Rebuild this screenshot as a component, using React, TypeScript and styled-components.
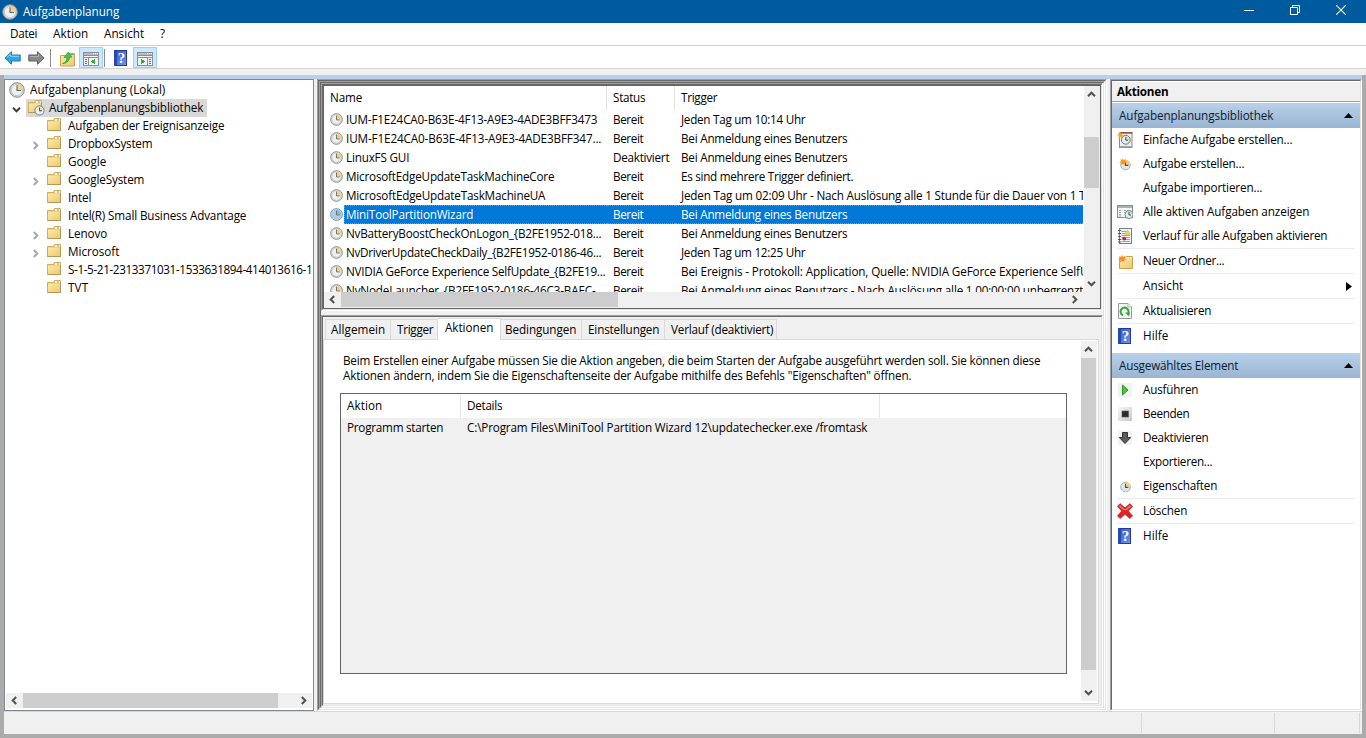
import React, { useLayoutEffect, useRef } from "react";
import styled, { createGlobalStyle, css } from "styled-components";

const GlobalStyle = createGlobalStyle`
  * { box-sizing: border-box; }
  body {
    margin: 0;
    background: #f0f0f0;
    color: #000;
    font-family: "Open Sans", "Noto Sans", sans-serif;
    font-size: 11.7px;
    overflow: hidden;
  }
  svg { display: block; flex: none; }
`;

/* ---------- text with a fixed advance width ---------- */

const LabelText = styled.span`
  white-space: pre;
  flex: none;
`;

/** Single-line text whose tracking is adjusted so that it takes up `width` pixels. */
function Label({ text, width }: { text: string; width: number }) {
  const ref = useRef<HTMLSpanElement>(null);
  useLayoutEffect(() => {
    const el = ref.current;
    if (!el) return;
    el.style.letterSpacing = "0px";
    const natural = el.getBoundingClientRect().width;
    el.style.letterSpacing = `${(width + 0.3 - natural) / text.length}px`;
  }, [text, width]);
  return <LabelText ref={ref}>{text}</LabelText>;
}

/* ---------- window shell ---------- */

const Window = styled.div`
  width: 1366px;
  height: 738px;
  display: flex;
  flex-direction: column;
  background: #f0f0f0;
`;

const TitleBar = styled.header`
  height: 23px;
  flex: none;
  display: flex;
  align-items: center;
  padding: 0 2px;
  background: #005a9e;
  color: #fff;
`;

const TitleText = styled.div`
  margin-left: 5px;
  flex: 1;
  line-height: 23px;
`;

const WindowButton = styled.div`
  width: 46px;
  height: 23px;
  display: flex;
  align-items: center;
  justify-content: center;
  padding-bottom: 3px;
`;

const MenuBar = styled.nav`
  height: 23px;
  flex: none;
  display: flex;
  gap: 15.7px;
  padding-left: 10px;
  line-height: 21px;
  background: #fff;
  border-bottom: 1px solid #d0d0d3;
`;

const ToolBar = styled.div`
  height: 23px;
  flex: none;
  display: flex;
  align-items: flex-end;
  padding-left: 3px;
  background: #fff;
  border-bottom: 1px solid #d5d5d5;
`;

const ToolButton = styled.div<{ $on?: boolean; $width: number; $drop?: number }>`
  width: ${(p) => p.$width}px;
  height: 21px;
  display: flex;
  align-items: center;
  justify-content: center;
  padding-top: ${(p) => p.$drop ?? 0}px;
  ${(p) =>
    p.$on &&
    css`
      background: #cce8ff;
      border: 1px solid #99d1ff;
    `}
`;

const ToolDivider = styled.div<{ $left: number; $right: number }>`
  width: 1px;
  height: 18px;
  margin: 0 ${(p) => p.$right}px 1px ${(p) => p.$left}px;
  background: #8c8c8c;
`;

const Body = styled.div`
  flex: 1;
  margin-top: 6px;
  min-height: 0;
  display: flex;
  flex-direction: column;
  background: #f0f0f0;
  border: solid #ababab;
  border-width: 0 4px 4px;
`;

const AccentStrip = styled.div`
  height: 4px;
  flex: none;
  background: #b8d0ea;
`;

const Panes = styled.main`
  height: 632px;
  flex: none;
  display: flex;
  gap: 3px;
`;

const StatusBar = styled.footer`
  flex: 1;
  display: flex;
  border-top: 1px solid #d7d7d7;
  padding: 1px 2px 1px 0;
`;

const StatusCell = styled.div<{ $width: number }>`
  width: ${(p) => p.$width}px;
  border-right: 1px solid #d7d7d7;
`;

const Sunken = styled.div`
  flex: 1;
  min-height: 0;
  min-width: 0;
  display: flex;
  flex-direction: column;
  border: 1px solid;
  border-color: #a0a0a0 #fff #fff #a0a0a0;
`;

const SunkenInner = styled(Sunken)`
  border-color: #696969 #e3e3e3 #e3e3e3 #696969;
`;

function Frame({ children }: { children: React.ReactNode }) {
  return (
    <Sunken>
      <SunkenInner>{children}</SunkenInner>
    </Sunken>
  );
}

/* ---------- scroll bars ---------- */

const HTrack = styled.div<{ $height: number }>`
  height: ${(p) => p.$height}px;
  flex: none;
  display: flex;
  align-items: flex-start;
  background: #f0f0f0;
`;

const VTrack = styled.div<{ $width: number }>`
  width: ${(p) => p.$width}px;
  flex: none;
  display: flex;
  flex-direction: column;
  background: #f0f0f0;
`;

const ScrollArrow = styled.div`
  width: 17px;
  height: 17px;
  flex: none;
  display: flex;
  align-items: center;
  justify-content: center;
`;

const HArrow = styled(ScrollArrow)`
  height: 15px;
`;

const VArrow = styled(ScrollArrow)`
  width: 15px;
`;

const HThumb = styled.div<{ $width: number }>`
  width: ${(p) => p.$width}px;
  height: 15px;
  background: #cdcdcd;
`;

const VThumb = styled.div<{ $height: number }>`
  width: 15px;
  height: ${(p) => p.$height}px;
  background: #cdcdcd;
`;

const Spring = styled.div<{ $size?: number }>`
  flex: ${(p) => (p.$size ? `none` : 1)};
  height: ${(p) => (p.$size ? `${p.$size}px` : "auto")};
`;

/* ---------- tree pane ---------- */

const TreePane = styled.aside`
  width: 310px;
  display: flex;
  flex-direction: column;
  padding: 1px 1px 2px 1px;
  background: #fff;
  border: 1px solid #828790;
`;

const TreeRows = styled.div`
  flex: 1;
  min-height: 0;
  overflow: hidden;
`;

const TreeRow = styled.div<{ $level: number }>`
  height: 18px;
  display: flex;
  align-items: flex-start;
  line-height: 17px;
  padding-left: ${(p) => [3, 2, 21][p.$level]}px;
`;

const TreeToggle = styled.div`
  width: 17px;
  height: 18px;
  flex: none;
  display: flex;
  align-items: center;
  justify-content: center;
  padding-top: 2px;
`;

const TreeIcon = styled.div<{ $level: number }>`
  width: ${(p) => [21, 23, 24][p.$level]}px;
  flex: none;
  padding: ${(p) => ["1px 0 0 0", "1px 0 0 2px", "1px 0 0 3px"][p.$level]};
`;

const Highlight = styled.div`
  height: 18px;
  width: 181px;
  margin-left: 1px;
  display: flex;
  align-items: flex-start;
  background: #d9d9d9;
`;

/* ---------- centre ---------- */

const Center = styled.section`
  width: 790px;
  display: flex;
`;

const TopSlot = styled.div`
  height: 228px;
  flex: none;
  display: flex;
  margin-bottom: 4px;
`;

const BottomSlot = styled.div`
  flex: 1;
  min-height: 0;
  display: flex;
`;

const ListBox = styled.div`
  flex: 1;
  min-height: 0;
  display: flex;
  flex-direction: column;
  background: #fff;
  border: 1px solid #646464;
`;

const ListMain = styled.div`
  flex: 1;
  min-height: 0;
  display: flex;
`;

const ListTable = styled.div`
  width: 759px;
  margin-right: 1px;
  overflow: hidden;
`;

const Columns = styled.div`
  display: grid;
  grid-template-columns: 283px 68px 1fr;
`;

const ListHeader = styled(Columns)`
  height: 24px;
  line-height: 23px;
`;

const HeaderCell = styled.div<{ $last?: boolean }>`
  padding-left: 6px;
  white-space: nowrap;
  border-right: ${(p) => (p.$last ? "none" : "1px solid #e2e2e2")};
`;

const ListRow = styled(Columns)<{ $selected?: boolean }>`
  height: 19px;
  line-height: 19px;
  grid-template-columns: 20px 263px 68px 1fr;
  ${(p) =>
    p.$selected &&
    css`
      color: #fff;
      line-height: 17px;
    `}
`;

const RowIcon = styled.div`
  padding: 3px 0 0 6px;
`;

const ListCell = styled.div<{ $selected?: boolean; $first?: boolean }>`
  min-width: 0;
  height: 19px;
  overflow: visible;
  white-space: nowrap;
  padding-left: ${(p) => (p.$first ? 2 : 6)}px;
  ${(p) =>
    p.$selected &&
    css`
      background: #0078d7;
      border: dotted #e08030;
      border-width: 1px 0;
    `}
  ${(p) =>
    p.$selected &&
    p.$first &&
    css`
      border-left-width: 1px;
      padding-left: 1px;
    `}
`;

const Details = styled.div`
  flex: 1;
  min-height: 0;
  display: flex;
  flex-direction: column;
  padding: 1px 2px 1px 0;
  background: #f0f0f0;
`;

const Tabs = styled.div`
  height: 21px;
  flex: none;
  display: flex;
  align-items: flex-end;
  padding-left: 2px;
`;

const Tab = styled.div<{ $width: number; $pad: number; $active?: boolean }>`
  width: ${(p) => p.$width}px;
  height: 20px;
  line-height: 19px;
  padding-left: ${(p) => p.$pad}px;
  background: #f0f0f0;
  border: solid #d9d9d9;
  border-width: 1px 1px 0 0;
  &:first-child {
    border-left-width: 1px;
  }
  ${(p) =>
    p.$active &&
    css`
      height: 22px;
      margin-bottom: -1px;
      line-height: 17px;
      background: #fff;
      z-index: 1;
    `}
`;

const TabPage = styled.div`
  flex: 1;
  min-height: 0;
  display: flex;
  padding: 1px 1px 2px 0;
  background: #fff;
  border: 1px solid #d9d9d9;
`;

const PageBody = styled.div`
  flex: 1;
  padding: 12px 14px 0 16px;
`;

const Paragraph = styled.p`
  margin: 0 0 10px 3px;
  line-height: 15px;
  display: flex;
  flex-direction: column;
  align-items: flex-start;
`;

const ActionTable = styled.div`
  width: 727px;
  height: 281px;
  background: #f0f0f0;
  border: 1px solid #646464;
`;

const ActionColumns = styled.div<{ $header?: boolean }>`
  display: grid;
  grid-template-columns: 120px 419px 1fr;
  height: ${(p) => (p.$header ? 24 : 19)}px;
  line-height: ${(p) => (p.$header ? 23 : 19)}px;
  background: ${(p) => (p.$header ? "#fff" : "transparent")};
`;

const ActionCell = styled.div<{ $rule?: boolean }>`
  padding-left: 6px;
  white-space: nowrap;
  border-right: 1px solid ${(p) => (p.$rule ? "#e5e5e5" : "transparent")};
`;

/* ---------- action pane ---------- */

const SidePane = styled.aside`
  width: 252px;
  display: flex;
`;

const SideBody = styled.div`
  flex: 1;
  padding-top: 1px;
  background: #fff;
`;

const SideTitle = styled.div`
  height: 20px;
  line-height: 19px;
  padding-left: 5px;
  margin-bottom: 1px;
  font-weight: 700;
  background: #f0f0f0;
  border-bottom: 1px solid #a0a0a0;
`;

const GroupHeader = styled.div`
  height: 25px;
  display: flex;
  align-items: center;
  justify-content: space-between;
  padding: 0 7px 1px;
  line-height: 23px;
  color: #0a1a30;
  background: linear-gradient(#b9d1ea, #99b4d1);
`;

const Group = styled.div`
  margin-bottom: 5px;
`;

const ActionItem = styled.div`
  height: 24px;
  display: flex;
  align-items: center;
  padding: 0 8px 0 5px;
`;

const ActionLabel = styled.div`
  height: 24px;
  line-height: 23px;
  white-space: nowrap;
`;

const ActionIcon = styled.div`
  width: 26px;
  flex: none;
`;

const Rule = styled.div`
  height: 1px;
  margin: 0 5px;
  background: #ececec;
`;

/* ---------- icons ---------- */

function ClockIcon({ size = 16, face = "#eef1f3", rim = "#8d8d8d", wedge = "#f2d27c" }) {
  return (
    <svg width={size} height={size} viewBox="0 0 16 16">
      <circle cx="8" cy="8" r="7.3" fill="#d4d4d2" stroke={rim} strokeWidth="1" />
      <circle cx="8" cy="8" r="5.6" fill={face} stroke="#b5b5b5" strokeWidth="0.5" />
      <path d="M8 8V2.2A5.8 5.8 0 0 1 13.8 8Z" fill={wedge} />
      <path d="M8 3.2V8.5H12" fill="none" stroke="#5d6670" strokeWidth="1.1" />
    </svg>
  );
}

function FolderShape() {
  return (
    <>
      <path d="M0.5 2.5H6.5L7.5 0.5H13.5V12.5H0.5Z" fill="#e9c468" stroke="#d2ac58" />
      <path d="M8 1H13V3H8Z" fill="#fbf4da" />
      <path d="M10 1.5H12V2.5H10Z" fill="#5aa0d8" />
      <path d="M1 3.5H13V12H1Z" fill="url(#folderFill)" />
      <path d="M0.5 12.5H13.5V3" fill="none" stroke="#b3965a" />
    </>
  );
}

function FolderIcon() {
  return (
    <svg width="14" height="13" viewBox="0 0 14 13">
      <FolderShape />
    </svg>
  );
}

function LibraryIcon() {
  return (
    <svg width="17" height="16" viewBox="0 0 17 16">
      <FolderShape />
      <circle cx="11.5" cy="10.5" r="4.6" fill="#e9eef2" stroke="#77808a" />
      <path d="M11.5 10.5V7A3.6 3.6 0 0 1 15 10.5Z" fill="#f4dd9b" />
      <path d="M11.5 7.5V10.8H14" fill="none" stroke="#3e4c58" />
    </svg>
  );
}

function BackArrow({ gray }: { gray?: boolean }) {
  return (
    <svg width="17" height="14" viewBox="0 0 17 14">
      <path
        d={gray ? "M16 7L9.5 0.8V4H0.8V10H9.5V13.2Z" : "M1 7L7.5 0.8V4H16.2V10H7.5V13.2Z"}
        fill={gray ? "#8a8a8a" : "#2fa5e6"}
        stroke={gray ? "#5c5c5c" : "#2178b4"}
        strokeWidth="1"
      />
      <path
        d={gray ? "M2 5.5H10.5V3.3" : "M3 6.4L6.5 3.1V5.3H15"}
        fill="none"
        stroke={gray ? "#b4b4b4" : "#8fd8fa"}
        strokeWidth="1"
      />
    </svg>
  );
}

function FolderUpIcon() {
  return (
    <svg width="15" height="16" viewBox="0 0 15 16">
      <path d="M0.5 4.5H7L8 2.5H14.5V15H0.5Z" fill="url(#folderFill)" stroke="#c9a24c" />
      <path d="M11 3.5H13.5" stroke="#5aa0d8" />
      <path
        d="M2.5 12.5C6 11.5 7 9 6.8 6.5H4L8.3 1L12 6L9.5 6.2C9.6 10 6.5 12.5 2.5 12.5Z"
        fill="#4cc04a"
        stroke="#2a9a36"
        strokeWidth="0.7"
      />
    </svg>
  );
}

function ConsoleIcon({ right }: { right?: boolean }) {
  return (
    <svg width="16" height="14" viewBox="0 0 16 14" shapeRendering="crispEdges">
      <rect x="0" y="0" width="16" height="14" fill="#8b8f94" />
      <rect x="1" y="1" width="14" height="2" fill="#b9bdc2" />
      <rect x="10" y="1" width="1" height="1" fill="#fff" />
      <rect x="12" y="1" width="1" height="1" fill="#fff" />
      <rect x="14" y="1" width="1" height="1" fill="#fff" />
      <rect x="1" y="4" width="14" height="1" fill="#f6f6f6" />
      <rect x={right ? 1 : 6} y="6" width="9" height="7" fill="#f4f4f4" />
      <rect x={right ? 11 : 1} y="6" width="4" height="7" fill="#f4f4f4" />
      {[7, 9, 11].map((y) => (
        <rect key={y} x={right ? 12 : 2} y={y} width="2" height="1" fill="#4a6fae" />
      ))}
      <path d={right ? "M4 6.5V12.5L8 9.5Z" : "M12 6.5V12.5L8 9.5Z"} fill="#2fb02f" />
    </svg>
  );
}

const HelpGlyph = styled.div`
  width: 13px;
  height: 16px;
  margin-left: 1px;
  border: 1px solid #22399a;
  border-left: 3px solid #2a48b4;
  background: linear-gradient(135deg, #3b5cc8, #6f92ea);
  color: #fff;
  font-family: "Liberation Serif", serif;
  font-weight: 700;
  font-size: 15px;
  line-height: 14px;
  text-align: center;
`;

function HelpIcon() {
  return <HelpGlyph>?</HelpGlyph>;
}

const STAR = "M4 0L5 2.4L7.6 1.2L6.4 3.8L8.6 5L6 5.6L6.6 8L4.2 6.4L2 8L2.3 5.5L0 4.6L2.3 3.6L1 1.2L3.2 2.3Z";

function WizardIcon() {
  return (
    <svg width="16" height="16" viewBox="0 0 16 16">
      <rect x="2.5" y="1" width="12.5" height="14.5" fill="#f1f1f0" stroke="#8b8b8b" />
      <path d="M3 0.8H15.5" stroke="#8a4a35" strokeWidth="1.4" />
      <path d="M3 14.6H15" stroke="#aaa" strokeWidth="1.4" />
      <circle cx="8.8" cy="7.8" r="4.4" fill="#e2eef4" stroke="#63727c" />
      <path d="M8.8 7.8V4.4A3.4 3.4 0 0 1 12.2 7.8Z" fill="#f3dc9a" />
      <path d="M8.8 5V8.2H11.2" fill="none" stroke="#394a58" />
      <path d={STAR} transform="scale(0.8)" fill="#f9a51f" />
    </svg>
  );
}

function SmallClock({ star }: { star?: boolean }) {
  return (
    <svg width="16" height="16" viewBox="0 0 16 16">
      <circle cx="8.5" cy="9" r="4.8" fill="#dbe7ed" stroke="#a5b4bd" />
      <path d="M8.5 9V4A5 5 0 0 1 13.5 9Z" fill="#f5cf7c" />
      <path d="M8.5 5.8V9.4H11.4" fill="none" stroke="#465463" strokeWidth="1.1" />
      {star && <path d={STAR} transform="translate(2.2 2) scale(0.9)" fill="#f7951c" />}
    </svg>
  );
}

function RunningTasksIcon() {
  return (
    <svg width="16" height="16" viewBox="0 0 16 16">
      <rect x="0.5" y="1.5" width="15" height="12" fill="#f6f7f8" stroke="#868b90" />
      <rect x="1" y="2" width="14" height="2" fill="#a9b0b6" />
      <path d="M2 6.5H5M7 6.5H14M2 8.5H5M7 8.5H9M2 10.5H5M2 12H5" stroke="#9aa4ae" strokeDasharray="2 1" />
      <circle cx="12" cy="10.6" r="4" fill="#e4edf2" stroke="#7c8890" />
      <path d="M12 10.6V7.6A3 3 0 0 1 15 10.6Z" fill="#f3dc9a" />
      <path d="M12 8V11H14" fill="none" stroke="#3f4e5a" />
    </svg>
  );
}

function HistoryIcon() {
  return (
    <svg width="16" height="16" viewBox="0 0 16 16">
      <rect x="2.5" y="0.5" width="12" height="15" fill="#f3f6fb" stroke="#6f7f96" />
      <path d="M4.5 3.5H9M4.5 5.5H8M4.5 7.5H13M4.5 9.5H13M4.5 11.5H13M4.5 13.5H13" stroke="#8fa3c4" />
      <path d="M1 2.5H4M1 5.5H4M1 8.5H4M1 11.5H4M1 14H4" stroke="#555" />
      <path d="M10.5 2L13.2 6.3H7.8Z" fill="#ffd930" stroke="#d9a800" strokeWidth="0.6" />
      <circle cx="7.3" cy="10.6" r="1.9" fill="#d6232a" />
    </svg>
  );
}

function NewFolderIcon() {
  return (
    <svg width="16" height="16" viewBox="0 0 16 16">
      <path d="M2.5 4.5H8L9 3.5H15.5V15.5H2.5Z" fill="url(#folderFill)" stroke="#c9a24c" />
      <path d="M9.5 5H12M13 5H14.5" stroke="#fff" />
      <path d={STAR} transform="translate(1 1.6)" fill="#f7901c" />
    </svg>
  );
}

function RefreshIcon() {
  return (
    <svg width="16" height="16" viewBox="0 0 16 16">
      <path d="M1.5 0.5H11L14.5 4V15.5H1.5Z" fill="#f6f6f6" stroke="#9a9a9a" />
      <path d="M11 0.5V4H14.5" fill="#fff" stroke="#b0b0b0" />
      <path d="M6 12.3A4 4 0 1 1 10.6 11.2" fill="none" stroke="#2fa83a" strokeWidth="2" />
      <path d="M8 9.4L13 9.4L12 13.6Z" fill="#2fa83a" />
    </svg>
  );
}

function RunIcon() {
  return (
    <svg width="16" height="16" viewBox="0 0 16 16">
      <rect x="1" y="1" width="14" height="14" fill="#f2f2f2" />
      <path d="M5.5 3V13L11 8Z" fill="#49c832" stroke="#2c9a24" />
    </svg>
  );
}

function StopIcon() {
  return (
    <svg width="16" height="16" viewBox="0 0 16 16">
      <rect x="1" y="1" width="14" height="14" fill="url(#stopFill)" />
      <rect x="5" y="5" width="6.5" height="6" fill="#2b2b2b" stroke="#555" strokeWidth="0.6" />
    </svg>
  );
}

function DisableIcon() {
  return (
    <svg width="16" height="16" viewBox="0 0 16 16">
      <rect x="1" y="1" width="14" height="14" fill="#f2f2f2" />
      <path d="M5.5 2.5H10.5V7.5H13.7L8 13.5L2.3 7.5H5.5Z" fill="#5c5c5c" stroke="#333" />
    </svg>
  );
}

function DeleteIcon() {
  return (
    <svg width="16" height="16" viewBox="0 0 16 16">
      <path
        d="M3 0.6L8 4.8L13 0.6L15.6 3.4L11.4 8L15.6 13L12.8 15.6L8 11.2L3.2 15.6L0.4 13L4.6 8L0.4 3.4Z"
        fill="#e02424"
        stroke="#b01c1c"
        strokeWidth="0.6"
        strokeLinejoin="round"
      />
      <path d="M3 2L8 6.5L13 2L14 3.4L9.5 7.2H6.5L2 3.4Z" fill="#f08a8a" opacity="0.8" />
    </svg>
  );
}

const CHEVRONS = {
  left: "M6.2 1L2.7 4.5L6.2 8",
  right: "M2.8 1L6.3 4.5L2.8 8",
  up: "M1 6.2L4.5 2.7L8 6.2",
  down: "M1 2.8L4.5 6.3L8 2.8",
};

function Chevron({ dir, color = "#505050" }: { dir: keyof typeof CHEVRONS; color?: string }) {
  return (
    <svg width="9" height="9" viewBox="0 0 9 9">
      <path d={CHEVRONS[dir]} fill="none" stroke={color} strokeWidth="2" />
    </svg>
  );
}

const Defs = styled.svg`
  position: absolute;
`;

function SharedGradients() {
  return (
    <Defs width="0" height="0">
      <defs>
        <linearGradient id="folderFill" x1="0" y1="0" x2="1" y2="1">
          <stop offset="0" stopColor="#fdeaa8" />
          <stop offset="1" stopColor="#efc96f" />
        </linearGradient>
        <linearGradient id="stopFill" x1="0" y1="0" x2="1" y2="1">
          <stop offset="0" stopColor="#f8f8f8" />
          <stop offset="1" stopColor="#c8c8c8" />
        </linearGradient>
      </defs>
    </Defs>
  );
}

/* ---------- data ---------- */

type Txt = [text: string, width: number];

const TREE: { label: Txt; children?: boolean }[] = [
  { label: ["Aufgaben der Ereignisanzeige", 156] },
  { label: ["DropboxSystem", 84], children: true },
  { label: ["Google", 38] },
  { label: ["GoogleSystem", 76], children: true },
  { label: ["Intel", 23] },
  { label: ["Intel(R) Small Business Advantage", 178] },
  { label: ["Lenovo", 39], children: true },
  { label: ["Microsoft", 51], children: true },
  { label: ["S-1-5-21-2313371031-1533631894-414013616-1", 244] },
  { label: ["TVT", 20] },
];

const READY: Txt = ["Bereit", 30];
const LOGON: Txt = ["Bei Anmeldung eines Benutzers", 166];

const TASKS: { name: Txt; status: Txt; trigger: Txt; selected?: boolean }[] = [
  { name: ["IUM-F1E24CA0-B63E-4F13-A9E3-4ADE3BFF3473", 251], status: READY, trigger: ["Jeden Tag um 10:14 Uhr", 124] },
  { name: ["IUM-F1E24CA0-B63E-4F13-A9E3-4ADE3BFF347...", 255], status: READY, trigger: LOGON },
  { name: ["LinuxFS GUI", 63], status: ["Deaktiviert", 56], trigger: LOGON },
  { name: ["MicrosoftEdgeUpdateTaskMachineCore", 208], status: READY, trigger: ["Es sind mehrere Trigger definiert.", 172] },
  {
    name: ["MicrosoftEdgeUpdateTaskMachineUA", 199],
    status: READY,
    trigger: ["Jeden Tag um 02:09 Uhr - Nach Auslösung alle 1 Stunde für die Dauer von 1 T", 404],
  },
  { name: ["MiniToolPartitionWizard", 127], status: READY, trigger: LOGON, selected: true },
  { name: ["NvBatteryBoostCheckOnLogon_{B2FE1952-018...", 255], status: READY, trigger: LOGON },
  { name: ["NvDriverUpdateCheckDaily_{B2FE1952-0186-46...", 255], status: READY, trigger: ["Jeden Tag um 12:25 Uhr", 124] },
  {
    name: ["NVIDIA GeForce Experience SelfUpdate_{B2FE19...", 259],
    status: READY,
    trigger: ["Bei Ereignis - Protokoll: Application, Quelle: NVIDIA GeForce Experience SelfU", 407],
  },
  {
    name: ["NvNodeLauncher_{B2FE1952-0186-46C3-BAEC-...", 258],
    status: READY,
    trigger: ["Bei Anmeldung eines Benutzers - Nach Auslösung alle 1.00:00:00 unbegrenzt", 402],
  },
];

const TABS: { label: Txt; width: number; pad: number; active?: boolean }[] = [
  { label: ["Allgemein", 54], width: 66, pad: 5 },
  { label: ["Trigger", 36], width: 47, pad: 6 },
  { label: ["Aktionen", 48], width: 63, pad: 7, active: true },
  { label: ["Bedingungen", 71], width: 81, pad: 4 },
  { label: ["Einstellungen", 71], width: 83, pad: 6 },
  { label: ["Verlauf (deaktiviert)", 102], width: 112, pad: 6 },
];

type Entry = { label: Txt; icon?: React.ReactNode; submenu?: boolean; ruleBefore?: boolean };

const LIBRARY_ACTIONS: Entry[] = [
  { label: ["Einfache Aufgabe erstellen...", 149], icon: <WizardIcon /> },
  { label: ["Aufgabe erstellen...", 101], icon: <SmallClock star /> },
  { label: ["Aufgabe importieren...", 119] },
  { label: ["Alle aktiven Aufgaben anzeigen", 166], icon: <RunningTasksIcon /> },
  { label: ["Verlauf für alle Aufgaben aktivieren", 184], icon: <HistoryIcon /> },
  { label: ["Neuer Ordner...", 81], icon: <NewFolderIcon />, ruleBefore: true },
  { label: ["Ansicht", 40], submenu: true, ruleBefore: true },
  { label: ["Aktualisieren", 68], icon: <RefreshIcon />, ruleBefore: true },
  { label: ["Hilfe", 25], icon: <HelpIcon />, ruleBefore: true },
];

const ITEM_ACTIONS: Entry[] = [
  { label: ["Ausführen", 55], icon: <RunIcon /> },
  { label: ["Beenden", 46], icon: <StopIcon /> },
  { label: ["Deaktivieren", 65], icon: <DisableIcon /> },
  { label: ["Exportieren...", 69] },
  { label: ["Eigenschaften", 74], icon: <SmallClock /> },
  { label: ["Löschen", 44], icon: <DeleteIcon />, ruleBefore: true },
  { label: ["Hilfe", 25], icon: <HelpIcon />, ruleBefore: true },
];

const T = ({ t }: { t: Txt }) => <Label text={t[0]} width={t[1]} />;

/* ---------- sections ---------- */

function Tree() {
  return (
    <TreePane>
      <TreeRows>
        <TreeRow $level={0}>
          <TreeIcon $level={0}>
            <ClockIcon />
          </TreeIcon>
          <T t={["Aufgabenplanung (Lokal)", 135]} />
        </TreeRow>
        <TreeRow $level={1}>
          <TreeToggle>
            <Chevron dir="down" color="#404040" />
          </TreeToggle>
          <Highlight>
            <TreeIcon $level={1}>
              <LibraryIcon />
            </TreeIcon>
            <T t={["Aufgabenplanungsbibliothek", 154]} />
          </Highlight>
        </TreeRow>
        {TREE.map((n) => (
          <TreeRow key={n.label[0]} $level={2}>
            <TreeToggle>{n.children && <Chevron dir="right" color="#a6a6a6" />}</TreeToggle>
            <TreeIcon $level={2}>
              <FolderIcon />
            </TreeIcon>
            <T t={n.label} />
          </TreeRow>
        ))}
      </TreeRows>
      <HTrack $height={15}>
        <HArrow>
          <Chevron dir="left" />
        </HArrow>
        <HThumb $width={255} />
        <Spring />
        <HArrow>
          <Chevron dir="right" />
        </HArrow>
      </HTrack>
    </TreePane>
  );
}

function TaskList() {
  return (
    <ListBox>
      <ListMain>
        <ListTable>
          <ListHeader>
            <HeaderCell>
              <T t={["Name", 32]} />
            </HeaderCell>
            <HeaderCell>
              <T t={["Status", 32]} />
            </HeaderCell>
            <HeaderCell $last>
              <T t={["Trigger", 36]} />
            </HeaderCell>
          </ListHeader>
          {TASKS.map((task) => (
            <ListRow key={task.name[0]} $selected={task.selected}>
              <RowIcon>
                {task.selected ? (
                  <ClockIcon size={13} face="#a9cdea" rim="#5f8db3" wedge="#8bb9d6" />
                ) : (
                  <ClockIcon size={13} />
                )}
              </RowIcon>
              <ListCell $first $selected={task.selected}>
                <T t={task.name} />
              </ListCell>
              <ListCell $selected={task.selected}>
                <T t={task.status} />
              </ListCell>
              <ListCell $selected={task.selected}>
                <T t={task.trigger} />
              </ListCell>
            </ListRow>
          ))}
        </ListTable>
        <VTrack $width={16}>
          <VArrow>
            <Chevron dir="up" />
          </VArrow>
          <Spring $size={34} />
          <VThumb $height={51} />
          <Spring />
          <VArrow>
            <Chevron dir="down" />
          </VArrow>
        </VTrack>
      </ListMain>
      <HTrack $height={16}>
        <HArrow>
          <Chevron dir="left" />
        </HArrow>
        <HThumb $width={277} />
        <Spring />
        <HArrow>
          <Chevron dir="right" />
        </HArrow>
        <HArrow />
      </HTrack>
    </ListBox>
  );
}

function TaskDetails() {
  return (
    <Details>
      <Tabs>
        {TABS.map((tab) => (
          <Tab key={tab.label[0]} $width={tab.width} $pad={tab.pad} $active={tab.active}>
            <T t={tab.label} />
          </Tab>
        ))}
      </Tabs>
      <TabPage>
        <PageBody>
          <Paragraph>
            <T
              t={[
                "Beim Erstellen einer Aufgabe müssen Sie die Aktion angeben, die beim Starten der Aufgabe ausgeführt werden soll. Sie können diese",
                697,
              ]}
            />
            <T t={['Aktionen ändern, indem Sie die Eigenschaftenseite der Aufgabe mithilfe des Befehls "Eigenschaften" öffnen.', 568]} />
          </Paragraph>
          <ActionTable>
            <ActionColumns $header>
              <ActionCell $rule>
                <T t={["Aktion", 35]} />
              </ActionCell>
              <ActionCell $rule>
                <T t={["Details", 35]} />
              </ActionCell>
            </ActionColumns>
            <ActionColumns>
              <ActionCell>
                <T t={["Programm starten", 96]} />
              </ActionCell>
              <ActionCell>
                <T t={["C:\\Program Files\\MiniTool Partition Wizard 12\\updatechecker.exe /fromtask", 400]} />
              </ActionCell>
            </ActionColumns>
          </ActionTable>
        </PageBody>
        <VTrack $width={16}>
          <VArrow>
            <Chevron dir="up" />
          </VArrow>
          <VThumb $height={312} />
          <Spring />
          <VArrow>
            <Chevron dir="down" />
          </VArrow>
        </VTrack>
      </TabPage>
    </Details>
  );
}

function ActionGroup({ title, entries }: { title: Txt; entries: Entry[] }) {
  return (
    <Group>
      <GroupHeader>
        <T t={title} />
        <svg width="9" height="5" viewBox="0 0 9 5">
          <path d="M0 5L4.5 0L9 5Z" fill="#000" />
        </svg>
      </GroupHeader>
      {entries.map((e) => (
        <React.Fragment key={e.label[0]}>
          {e.ruleBefore && <Rule />}
          <ActionItem>
            <ActionIcon>{e.icon}</ActionIcon>
            <ActionLabel>
              <T t={e.label} />
            </ActionLabel>
            {e.submenu && (
              <>
                <Spring />
                <svg width="6" height="9" viewBox="0 0 6 9">
                  <path d="M0 0L6 4.5L0 9Z" fill="#000" />
                </svg>
              </>
            )}
          </ActionItem>
        </React.Fragment>
      ))}
    </Group>
  );
}

export default function App() {
  return (
    <Window>
      <GlobalStyle />
      <SharedGradients />
      <TitleBar>
        <ClockIcon />
        <TitleText>
          <T t={["Aufgabenplanung", 96]} />
        </TitleText>
        <WindowButton>
          <svg width="10" height="10" viewBox="0 0 10 10">
            <path d="M0 5.5H10" stroke="#fff" />
          </svg>
        </WindowButton>
        <WindowButton>
          <svg width="10" height="10" viewBox="0 0 10 10">
            <path d="M0.5 2.5H7.5V9.5H0.5ZM2.5 2.5V0.5H9.5V7.5H7.5" fill="none" stroke="#fff" />
          </svg>
        </WindowButton>
        <WindowButton>
          <svg width="10" height="10" viewBox="0 0 10 10">
            <path d="M0.3 0.3L9.7 9.7M9.7 0.3L0.3 9.7" stroke="#fff" strokeWidth="1.1" />
          </svg>
        </WindowButton>
      </TitleBar>
      <MenuBar>
        <T t={["Datei", 27]} />
        <T t={["Aktion", 35]} />
        <T t={["Ansicht", 40]} />
        <T t={["?", 5]} />
      </MenuBar>
      <ToolBar>
        <ToolButton $width={19} $drop={1}>
          <BackArrow />
        </ToolButton>
        <ToolButton $width={28} $drop={1}>
          <BackArrow gray />
        </ToolButton>
        <ToolDivider $left={0} $right={4} />
        <ToolButton $width={24} $drop={2}>
          <FolderUpIcon />
        </ToolButton>
        <ToolButton $width={24} $drop={3} $on>
          <ConsoleIcon />
        </ToolButton>
        <ToolDivider $left={1} $right={2} />
        <ToolButton $width={26}>
          <HelpIcon />
        </ToolButton>
        <ToolButton $width={24} $drop={3} $on>
          <ConsoleIcon right />
        </ToolButton>
      </ToolBar>
      <Body>
        <AccentStrip />
        <Panes>
          <Tree />
          <Center>
            <Frame>
              <Frame>
                <TopSlot>
                  <Frame>
                    <TaskList />
                  </Frame>
                </TopSlot>
                <BottomSlot>
                  <Frame>
                    <TaskDetails />
                  </Frame>
                </BottomSlot>
              </Frame>
            </Frame>
          </Center>
          <SidePane>
            <Frame>
              <SideBody>
                <SideTitle>
                  <T t={["Aktionen", 51]} />
                </SideTitle>
                <ActionGroup title={["Aufgabenplanungsbibliothek", 154]} entries={LIBRARY_ACTIONS} />
                <ActionGroup title={["Ausgewähltes Element", 119]} entries={ITEM_ACTIONS} />
              </SideBody>
            </Frame>
          </SidePane>
        </Panes>
        <StatusBar>
          <StatusCell $width={1138} />
          <StatusCell $width={133} />
          <StatusCell $width={85} />
        </StatusBar>
      </Body>
    </Window>
  );
}
